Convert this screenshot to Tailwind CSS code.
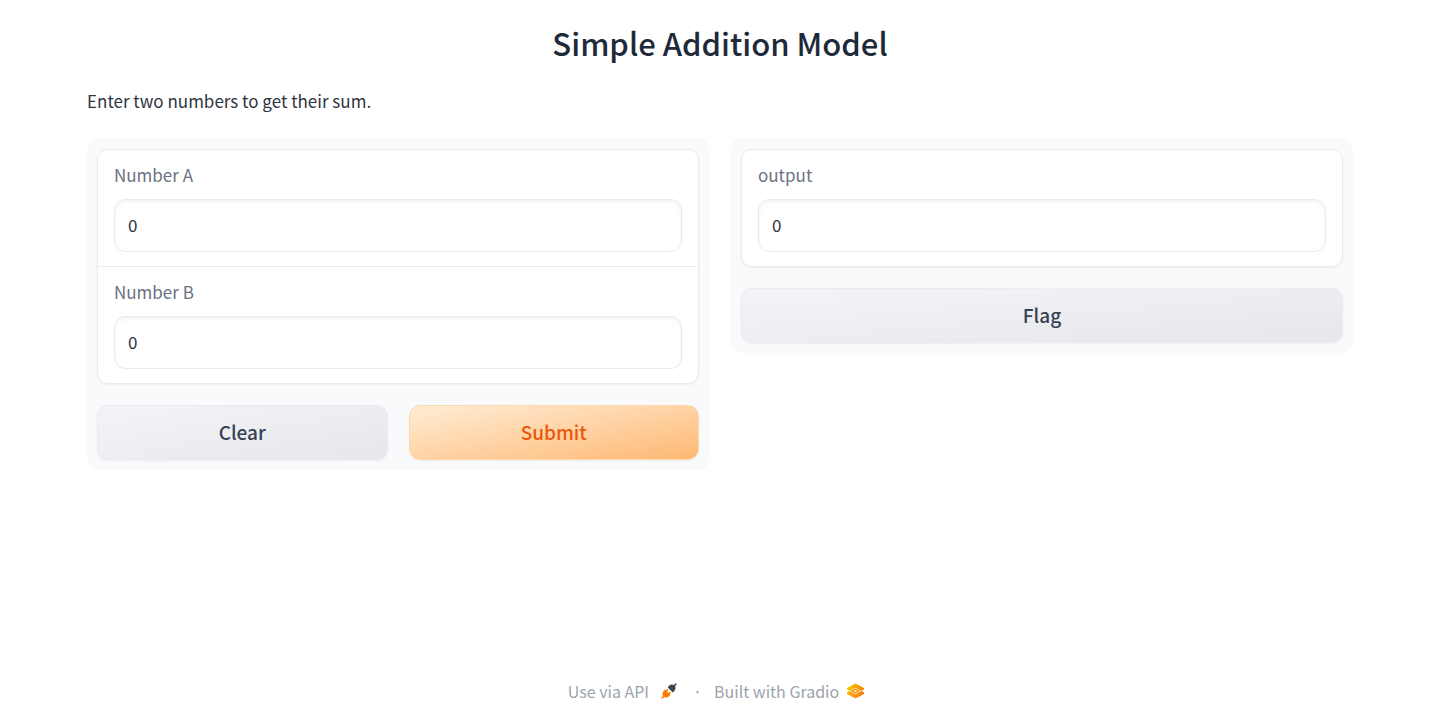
<!DOCTYPE html>
<html lang="en">
<head>
    <meta charset="UTF-8" />
    <meta name="viewport" content="width=device-width, initial-scale=1.0" />
    <title>Simple Addition Model</title>
    <script src="https://cdn.jsdelivr.net/npm/@tailwindcss/browser@4"></script>
</head>
<body class="bg-white font-['Noto_Sans_CJK_JP','Open_Sans',sans-serif] text-[#2f3541]">

    <div class="min-h-screen flex flex-col px-6 lg:px-[87px] pt-[23px]">
        <h1 class="text-[31px] leading-10 font-medium text-center text-gray-800 mb-6">Simple Addition Model</h1>
        <p class="text-[17px] leading-7 mb-[23px]">Enter two numbers to get their sum.</p>

        <main class="grid md:grid-cols-2 items-start gap-[22px]">
            <!-- Inputs -->
            <form class="bg-gray-50 rounded-[11px] p-[10px] pt-[11px]">
                <div class="bg-white border border-[#e9ebee] rounded-[11px] shadow-xs divide-y divide-[#e9ebee] mb-[21px]">
                    <div class="px-[16px] pt-[13px] pb-[14px]">
                        <label for="number-a" class="block text-[17px] leading-6 text-gray-500 mb-3">Number A</label>
                        <input type="text" inputmode="numeric" id="number-a" value="0" class="block w-full h-[53px] px-[13px] pb-0.5 text-[17px] bg-white border border-[#e9ebee] rounded-[11px] inset-shadow-sm focus:outline-none focus:border-orange-300" />
                    </div>
                    <div class="px-[16px] pt-[13px] pb-[14px]">
                        <label for="number-b" class="block text-[17px] leading-6 text-gray-500 mb-3">Number B</label>
                        <input type="text" inputmode="numeric" id="number-b" value="0" class="block w-full h-[53px] px-[13px] pb-0.5 text-[17px] bg-white border border-[#e9ebee] rounded-[11px] inset-shadow-sm focus:outline-none focus:border-orange-300" />
                    </div>
                </div>
                <div class="grid grid-cols-2 gap-[21px]">
                    <button type="reset" class="h-[55px] text-[19px] font-medium text-gray-700 bg-linear-to-br from-gray-100 to-gray-200 border border-[#e9ebee] rounded-[11px] shadow-xs">Clear</button>
                    <button type="button" class="h-[55px] text-[19px] font-medium text-[#ea580c] bg-linear-to-br from-[#ffedd5] to-[#fdb872] border border-[#fed7aa] rounded-[11px] shadow-xs">Submit</button>
                </div>
            </form>

            <!-- Output -->
            <section class="bg-gray-50 rounded-[11px] p-[10px] pt-[11px]">
                <div class="bg-white border border-[#e9ebee] rounded-[11px] shadow-xs mb-[21px]">
                    <div class="px-[16px] pt-[13px] pb-[14px]">
                        <label for="output" class="block text-[17px] leading-6 text-gray-500 mb-3">output</label>
                        <input type="text" id="output" value="0" readonly class="block w-full h-[53px] px-[13px] pb-0.5 text-[17px] bg-white border border-[#e9ebee] rounded-[11px] inset-shadow-sm focus:outline-none" />
                    </div>
                </div>
                <button type="button" class="block w-full h-[55px] text-[19px] font-medium text-gray-700 bg-linear-to-br from-gray-100 to-gray-200 border border-[#e9ebee] rounded-[11px] shadow-xs">Flag</button>
            </section>
        </main>

        <footer class="mt-auto pb-[21px] pr-2 flex justify-center items-center text-[16px] leading-7 text-[#9ca3af]">
            <a href="#" class="flex items-center gap-3">
                Use via API
                <svg class="w-4 h-4" viewBox="0 0 28 28" fill="none">
                    <path fill="#3c4555" d="M26.94 2.94a1.33 1.33 0 0 0-1.88-1.88L22.57 3.54C21.12 2.59 19.54 2.43 18.18 2.64C16.55 2.89 15.11 3.67 14.39 4.39L12.39 6.39a1.33 1.33 0 0 0 0 1.89L19.72 15.61a1.33 1.33 0 0 0 1.89 0L23.61 13.61C24.33 12.89 25.11 11.45 25.36 9.82C25.57 8.46 25.41 6.88 24.46 5.43Z" />
                    <path fill="#ff7c00" d="M12.28 12.94a1.33 1.33 0 0 0-1.89-1.88L8.67 12.78L8.28 12.39a1.33 1.33 0 0 0-1.89 0L4.39 14.39C3.67 15.11 2.89 16.55 2.64 18.18C2.43 19.54 2.59 21.12 3.54 22.57L1.06 25.06a1.33 1.33 0 0 0 1.88 1.88L5.43 24.46C6.88 25.41 8.46 25.57 9.82 25.36C11.45 25.11 12.89 24.33 13.61 23.61L15.61 21.61a1.33 1.33 0 0 0 0-1.89L15.22 19.33L16.94 17.61a1.33 1.33 0 0 0-1.88-1.89L13.33 17.45L10.55 14.67Z" />
                </svg>
            </a>
            <span class="ml-4 mr-3">·</span>
            <a href="#" class="flex items-center gap-2">
                Built with Gradio
                <svg class="w-[17px] h-4" viewBox="0 0 34 32" fill="none">
                    <defs>
                        <linearGradient id="top" x1="3" y1="10" x2="32" y2="12" gradientUnits="userSpaceOnUse">
                            <stop stop-color="#f9c400" />
                            <stop offset="1" stop-color="#fb8500" />
                        </linearGradient>
                        <linearGradient id="bottom" x1="30" y1="20" x2="4" y2="20" gradientUnits="userSpaceOnUse">
                            <stop stop-color="#fb7d10" />
                            <stop offset="1" stop-color="#fbab0c" />
                        </linearGradient>
                    </defs>
                    <path fill="url(#bottom)" d="M17 31L34 22V19L29 16L17 22.5L5 16L0 19V22Z" />
                    <path fill="url(#top)" d="M17 1L34 10V13L29 16L17 9.5L5 16L0 13V10Z" />
                    <path stroke="#fb9a10" stroke-width="3" d="M10 16L17 12L24 16L17 20Z" />
                </svg>
            </a>
        </footer>
    </div>

</body>
</html>
